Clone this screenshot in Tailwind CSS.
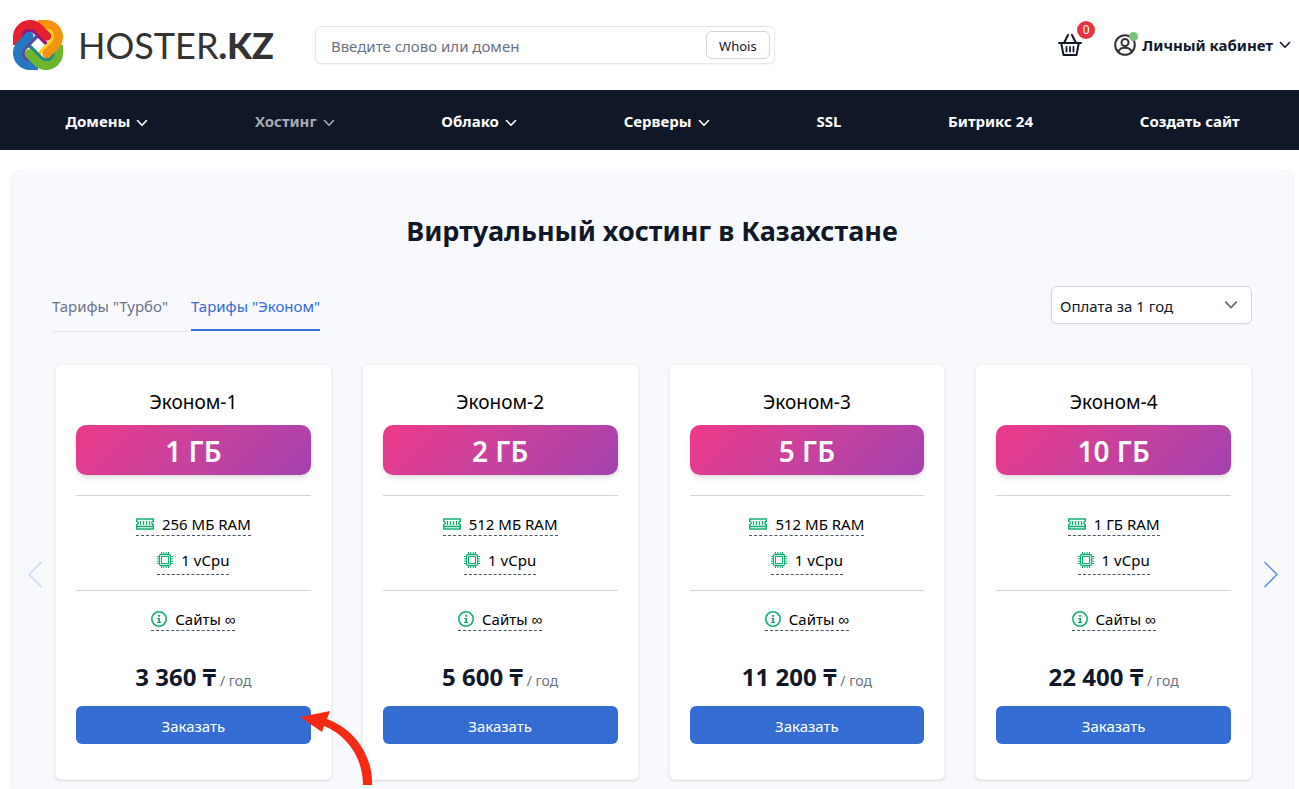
<!DOCTYPE html>
<html lang="ru">
<head>
  <meta charset="UTF-8" />
  <meta name="viewport" content="width=device-width, initial-scale=1.0"/>
  <title>Виртуальный хостинг в Казахстане</title>
  <script src="https://cdn.jsdelivr.net/npm/@tailwindcss/browser@4"></script>
</head>
<body class="min-h-screen flex flex-col bg-white text-gray-900 text-[15px] font-['Noto_Sans',sans-serif]">
  <!-- shared icons -->
  <svg class="hidden" aria-hidden="true">
    <symbol id="chevron" viewBox="0 0 12 8"><path d="M1.5 1.5 6 6.2 10.500 1.5" fill="none" stroke="currentColor" stroke-width="1.600" stroke-linecap="round" stroke-linejoin="round"/></symbol>
    <symbol id="ram" viewBox="0 0 18 12">
      <path d="M.7 1h16.600v2.400a1.500 1.500 0 0 0 0 3v4.600H.7V6.400a1.500 1.500 0 0 0 0-3z" fill="none" stroke="currentColor" stroke-width="1.400" stroke-linejoin="round"/>
      <path d="M4.500 3v4M7.500 3v4M10.500 3v4M13.500 3v4" fill="none" stroke="currentColor" stroke-width="1.300"/>
      <path d="M1 8.500h16" stroke="currentColor" stroke-width="1.600"/>
    </symbol>
    <symbol id="cpu" viewBox="0 0 16 16" fill="none" stroke="currentColor">
      <rect x="2.500" y="2.500" width="11" height="11" rx="1.500" stroke-width="1.300"/>
      <rect x="4.500" y="4.500" width="7" height="7" stroke-width="1"/>
      <path d="M4.500 0v2M6.800 0v2M9.200 0v2M11.500 0v2M4.500 14v2M6.800 14v2M9.200 14v2M11.500 14v2M0 4.500h2M0 6.800h2M0 9.200h2M0 11.500h2M14 4.500h2M14 6.800h2M14 9.200h2M14 11.500h2" stroke-width="1"/>
    </symbol>
    <symbol id="info" viewBox="0 0 16 16">
      <circle cx="8" cy="8" r="7.200" fill="none" stroke="currentColor" stroke-width="1.600"/>
      <path d="M7 4h2v1.700H7zM6.200 6.900H9v3.900h1v1.200H6v-1.200h1.300V8H6.200z" fill="currentColor"/>
    </symbol>
  </svg>

  <header class="h-[90px] flex items-center pl-3 pr-2">
    <a href="#" class="flex items-center" aria-label="Hoster.kz">
      <svg class="w-[52px] h-[52px]" viewBox="-1 -1 52 52" fill="none" stroke-linejoin="round">
        <g stroke-width="9">
          <path d="M4.500 25v-8a12.500 12.500 0 0 1 12.500-12.500" stroke="#e6202e"/>
          <path d="M25 4.500h8a12.500 12.500 0 0 1 12.500 12.500" stroke="#f5930f"/>
          <path d="M45.500 25v8a12.500 12.500 0 0 1-12.500 12.500" stroke="#6db52d"/>
          <path d="M25 45.500h-8a12.500 12.500 0 0 1-12.500-12.500" stroke="#2577c0"/>
        </g>
        <g stroke-width="3.500">
          <path d="M10.250 20v-3a6.750 6.750 0 0 1 11.550-4.800L34 24.400" stroke="#93177c"/>
          <path d="M30 10.250h3a6.750 6.750 0 0 1 4.800 11.550L25.600 34" stroke="#fcd016"/>
          <path d="M39.750 30v3a6.750 6.750 0 0 1-11.550 4.800L16 25.600" stroke="#1f8a83"/>
          <path d="M20 39.750h-3a6.750 6.750 0 0 1-4.800-11.550L24.400 16" stroke="#5a4a9c"/>
        </g>
        <g stroke-width="9" stroke-linecap="round">
          <path d="M17 4.500a12.500 12.500 0 0 1 8.800 3.700L33.800 16.200" stroke="#e6202e"/>
          <path d="M45.500 17a12.500 12.500 0 0 1-3.700 8.800L33.800 33.800" stroke="#f5930f"/>
          <path d="M33 45.500a12.500 12.500 0 0 1-8.800-3.700L16.200 33.800" stroke="#6db52d"/>
          <path d="M4.500 33a12.500 12.500 0 0 1 3.700-8.800L16.200 16.200" stroke="#2577c0"/>
        </g>
      </svg>
      <span class="ml-3.5 text-[36px] leading-none text-[#333] font-['Lato',sans-serif]">HOSTER<b class="font-black">.KZ</b></span>
    </a>
    <form class="ml-[41px] w-[460px] h-[38px] flex items-center rounded-md border border-gray-200 shadow-xs pr-1">
      <input type="text" aria-label="Домен" placeholder="Введите слово или домен" class="flex-1 min-w-0 pt-0.5 px-[15px] outline-none placeholder:text-gray-500"/>
      <button type="button" class="w-16 h-7 pt-1 rounded-md border border-gray-300 text-[13px]">Whois</button>
    </form>
    <div class="ml-auto flex items-center">
      <a href="#" class="relative" aria-label="Корзина">
        <svg class="w-6 h-6" viewBox="0 0 24 24" fill="none" stroke="#111827" stroke-width="2" stroke-linecap="round" stroke-linejoin="round">
          <path d="M1 10h22M3.300 10.500 5.500 22h13l2.200-11.500M6 10l4-8M18 10l-4-8" />
          <path d="M8.500 14v4.500M12 14v4.500M15.500 14v4.500" stroke-width="1.800"/>
        </svg>
        <span class="absolute -top-3 left-[19px] w-[18px] h-[18px] rounded-full bg-[#e53442] text-white text-xs leading-[18px] text-center">0</span>
      </a>
      <button type="button" class="ml-8 flex items-center font-bold">
        <span class="relative mr-1.5">
          <svg class="w-[22px] h-[22px]" viewBox="0 0 22 22" fill="none" stroke="#333" stroke-width="2">
            <circle cx="11" cy="11" r="9.800"/>
            <circle cx="11" cy="8.500" r="3.500"/>
            <path d="M4.300 18c1-3.300 3.500-4.200 6.700-4.200s5.700.9 6.700 4.200"/>
          </svg>
          <span class="absolute -top-0.5 -right-0.5 w-[9px] h-[9px] rounded-full bg-[#78c27a]"></span>
        </span>
        Личный кабинет
        <svg class="ml-1.5 w-3 h-2"><use href="#chevron"/></svg>
      </button>
    </div>
  </header>

  <nav class="h-[60px] pt-0.5 bg-gray-900 text-white font-bold flex items-center justify-around pl-3 pr-1.5">
    <a href="#" class="flex items-center gap-1.5">Домены <svg class="mt-1 w-3 h-2"><use href="#chevron"/></svg></a>
    <a href="#" class="flex items-center gap-1.5 text-[#a9abb0]">Хостинг <svg class="mt-1 w-3 h-2"><use href="#chevron"/></svg></a>
    <a href="#" class="flex items-center gap-1.5">Облако <svg class="mt-1 w-3 h-2"><use href="#chevron"/></svg></a>
    <a href="#" class="flex items-center gap-1.5">Серверы <svg class="mt-1 w-3 h-2"><use href="#chevron"/></svg></a>
    <a href="#">SSL</a>
    <a href="#">Битрикс 24</a>
    <a href="#">Создать сайт</a>
  </nav>

  <main class="relative flex-1 mt-5 ml-3 mr-1.5 pl-10 pr-[41px] pb-2.5 rounded-t-lg bg-[#f8f9fd] shadow">
    <h1 class="pt-10 text-[27px] leading-[42px] font-bold text-center">Виртуальный хостинг в Казахстане</h1>

    <div class="mt-[34px] flex items-start justify-between">
      <div class="flex items-start" role="tablist">
        <button type="button" role="tab" class="h-[46px] pr-[23px] pb-1 text-gray-500 border-b border-gray-200">Тарифы "Турбо"</button>
        <button type="button" role="tab" aria-selected="true" class="h-[45px] pb-0.5 text-[#356cd4] border-b-2 border-[#356cd4]">Тарифы "Эконом"</button>
      </div>
      <div class="relative">
        <select aria-label="Период оплаты" class="appearance-none w-[201px] h-[38px] pt-0.5 px-2 rounded-md border border-gray-300 bg-white shadow-xs">
          <option>Оплата за 1 год</option>
        </select>
        <svg class="absolute right-3.5 top-3.5 w-3.5 h-2.5 text-gray-500 pointer-events-none"><use href="#chevron"/></svg>
      </div>
    </div>

    <div id="plans" class="mt-8 pl-[3px] grid grid-cols-4 gap-[30px]"></div>

    <button type="button" aria-label="Назад" class="absolute left-4 top-[391px] text-[#c5d6f5]">
      <svg class="w-3.5 h-[27px]" viewBox="0 0 14 27" fill="none" stroke="currentColor" stroke-width="1.500"><path d="M13.500 1 1 13.500 13.500 26"/></svg>
    </button>
    <button type="button" aria-label="Вперёд" class="absolute right-[15px] top-[391px] text-[#5b8cdc]">
      <svg class="w-3.5 h-[27px]" viewBox="0 0 14 27" fill="none" stroke="currentColor" stroke-width="1.500"><path d="M.5 1 13 13.500.5 26"/></svg>
    </button>
  </main>

  <template id="plan">
    <article class="relative h-[416px] px-5 flex flex-col items-center rounded-md bg-white border border-gray-100 shadow text-black">
      <h2 data-name class="mt-[21px] text-[19px] leading-8"></h2>
      <div data-disk class="mt-[7px] w-full h-[50px] pt-px rounded-[10px] bg-linear-135 from-[#ed3889] to-[#a341ae] shadow-md text-white text-[28px] leading-[50px] font-semibold text-center"></div>
      <div class="mt-5 w-full border-t border-gray-300"></div>
      <div class="mt-[17px] h-[23px] flex items-center gap-2 border-b border-dashed border-gray-600">
        <svg class="w-[18px] h-3 text-[#16ad74]"><use href="#ram"/></svg><span data-ram></span>
      </div>
      <div class="mt-3 h-[27px] pb-0.5 flex items-center gap-2 border-b border-dashed border-gray-600">
        <svg class="w-4 h-4 text-[#16ad74]"><use href="#cpu"/></svg>1 vCpu
      </div>
      <div class="mt-[15px] w-full border-t border-gray-300"></div>
      <div class="mt-[17px] h-[23px] flex items-center gap-2 border-b border-dashed border-gray-600">
        <svg class="w-4 h-4 text-[#16ad74]"><use href="#info"/></svg>Сайты ∞
      </div>
      <p class="mt-7 leading-9 text-gray-500 text-sm"><b data-price class="text-2xl leading-9 text-gray-900"></b> / год</p>
      <button type="button" class="mt-[7px] w-full h-[38px] pt-0.5 rounded-md bg-[#356cd4] text-white">Заказать</button>
    </article>
  </template>

  <script>
    const plans = [
      { name: "Эконом-1", disk: "1 ГБ", ram: "256 МБ RAM", price: "3 360 ₸" },
      { name: "Эконом-2", disk: "2 ГБ", ram: "512 МБ RAM", price: "5 600 ₸" },
      { name: "Эконом-3", disk: "5 ГБ", ram: "512 МБ RAM", price: "11 200 ₸" },
      { name: "Эконом-4", disk: "10 ГБ", ram: "1 ГБ RAM", price: "22 400 ₸" }
    ];
    const list = document.getElementById("plans");
    const template = document.getElementById("plan");

    plans.forEach((plan, i) => {
      const card = template.content.cloneNode(true);
      for (const key in plan) {
        card.querySelector(`[data-${key}]`).textContent = plan[key];
      }
      if (i === 0) {
        // arrow pointing at the first order button
        card.querySelector("article").insertAdjacentHTML("beforeend", `
          <svg class="absolute z-10 left-[244px] top-[345px] w-[74px] h-[76px]" viewBox="0 0 74 76" fill="#f52a14">
            <path d="M0 7 30 1 27 9C54 19 73 45 72 75H63C63 48 47 25 24 16L22 22z"/>
          </svg>`);
      }
      list.appendChild(card);
    });
  </script>
</body>
</html>
